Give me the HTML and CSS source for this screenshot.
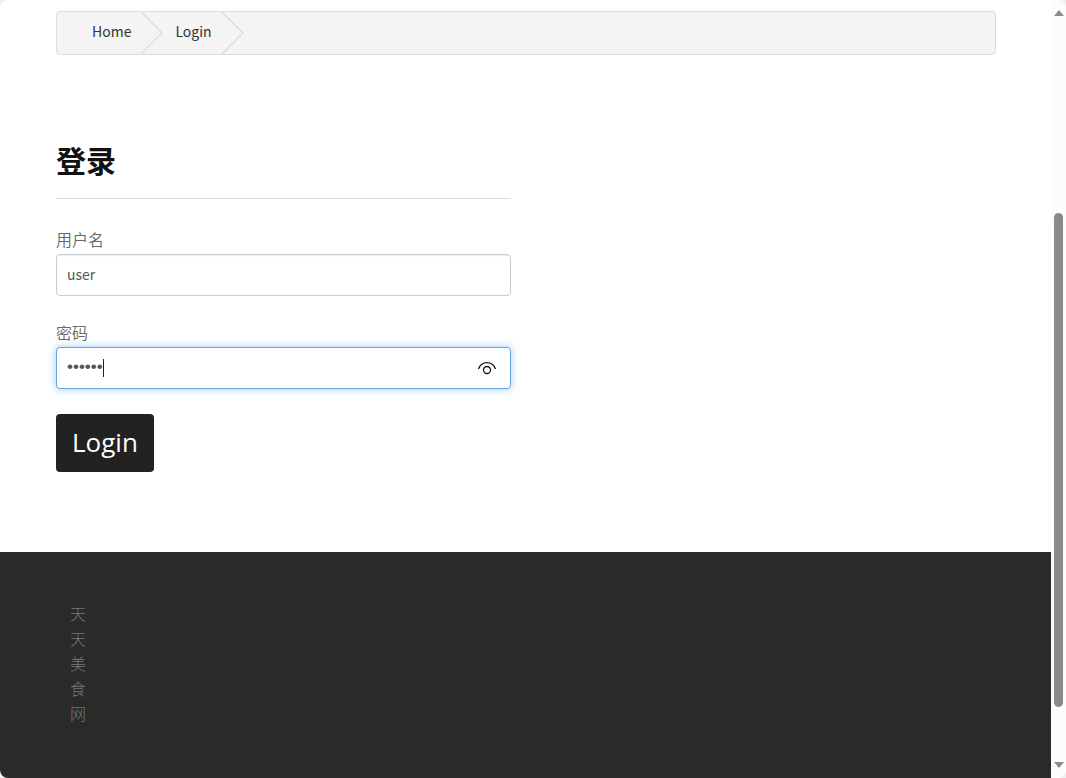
FILE: index.html
```
<!DOCTYPE html>
<html lang="zh-CN">
<head>
    <meta charset="UTF-8">
    <meta name="viewport" content="width=device-width, initial-scale=1.0">
    <title>登录</title>
    <link rel="stylesheet" href="styles.css">
</head>
<body>
    <div class="window">
        <div class="page">
            <main class="container">
                <nav>
                    <ul class="breadcrumb">
                        <li>
                            <a href="#">Home</a>
                            <svg class="arrow" viewBox="0 0 23 42"><path d="M0 -1L22 21L0 43"/></svg>
                        </li>
                        <li>
                            <a href="#">Login</a>
                            <svg class="arrow" viewBox="0 0 23 42"><path d="M0 -1L22 21L0 43"/></svg>
                        </li>
                    </ul>
                </nav>

                <form class="login-form">
                    <h1>登录</h1>
                    <div class="form-group">
                        <label for="username">用户名</label>
                        <input type="text" id="username" class="form-control" value="user">
                    </div>
                    <div class="form-group">
                        <label for="password">密码</label>
                        <div class="password-box">
                            <input type="password" id="password" class="form-control active" value="123456">
                            <span class="caret"></span>
                            <button type="button" class="reveal" aria-label="显示密码">
                                <svg viewBox="0 0 20 16"><path d="M1.500 9C3 5 6 2.700 10 2.700S17 5 18.500 9"/><circle cx="10" cy="10" r="3.500"/></svg>
                            </button>
                        </div>
                    </div>
                    <button type="submit" class="btn">Login</button>
                </form>
            </main>

            <footer class="footer">
                <p>天<br>天<br>美<br>食<br>网</p>
            </footer>
        </div>

        <!-- 滚动条 -->
        <div class="scrollbar">
            <svg class="scroll-arrow" viewBox="0 0 10 6"><path d="M0 6L5 0L10 6Z"/></svg>
            <div class="track"><div class="thumb"></div></div>
            <svg class="scroll-arrow" viewBox="0 0 10 6"><path d="M0 0L5 6L10 0Z"/></svg>
        </div>
    </div>
</body>
</html>
```
FILE: styles.css
```
*{
    box-sizing: border-box;
}
body{
    margin: 0;
    background: #f0f0f0;
    color: #666;
    font-family: "Noto Sans CJK SC", sans-serif;
    font-size: 16px;
    line-height: 25px;
}
.window{
    display: flex;
    min-height: 100vh;
    background: #fff;
    border-radius: 8px;
    overflow: hidden;
}
.page{
    flex: 1;
    display: flex;
    flex-direction: column;
}
.container{
    padding: 11px 55px 80px 56px;
}

/*面包屑导航*/
.breadcrumb{
    display: flex;
    height: 44px;
    margin: 0;
    padding: 0 0 0 23px;
    list-style: none;
    background: #f4f4f4;
    border: 1px solid #ddd;
    border-radius: 4px;
}
.breadcrumb li{
    display: flex;
    align-items: center;
    gap: 9px;
    padding-left: 12px;
}
.breadcrumb a{
    color: #333;
    font-size: 14px;
    text-decoration: none;
    padding-bottom: 4px;
}
.arrow{
    width: 23px;
    height: 42px;
    fill: none;
    stroke: #ddd;
    stroke-width: 1.4;
}

/*登录表单*/
.login-form{
    width: calc(50% - 15px);
    margin-top: 82px;
}
h1{
    margin: 0 0 28px;
    padding-bottom: 17px;
    color: #111;
    font-size: 30px;
    line-height: 44px;
    border-bottom: 1px solid #ddd;
}
.form-group{
    margin-bottom: 24px;
}
label{
    display: block;
    margin-bottom: 2px;
    font-weight: 350;
}
.form-control{
    display: block;
    width: 100%;
    height: 42px;
    padding: 0 10px 2px;
    color: #555;
    font-family: inherit;
    font-size: 14px;
    background: #fff;
    border: 1px solid #ccc;
    border-radius: 4px;
    box-shadow: inset 0 1px 1px rgba(0, 0, 0, 0.08);
    outline: none;
}
.password-box{
    position: relative;
}
.password-box .form-control{
    font-family: "Liberation Sans", sans-serif;
    font-size: 17px;
}
.form-control.active{
    border-color: #66a5d9;
    box-shadow: 0 0 8px rgba(82, 168, 236, 0.6);
}
.caret{
    position: absolute;
    left: 47px;
    top: 12px;
    width: 1px;
    height: 18px;
    background: #222;
}
.reveal{
    position: absolute;
    right: 14px;
    top: 13px;
    width: 20px;
    height: 16px;
    padding: 0;
    border: none;
    background: none;
    cursor: pointer;
}
.reveal svg{
    display: block;
    width: 20px;
    height: 16px;
    fill: none;
    stroke: #111;
    stroke-width: 1.3;
}
.btn{
    display: block;
    height: 58px;
    margin-top: 25px;
    padding: 0 16px 2px;
    color: #fff;
    font-family: "Open Sans", sans-serif;
    font-size: 26px;
    background: #222;
    border: none;
    border-radius: 4px;
    cursor: pointer;
}
.btn:hover{
    background: #333;
}

/*页脚*/
.footer{
    flex: 1;
    padding: 49px 70px;
    background: #2a2a2a;
}
.footer p{
    margin: 0;
    color: #777;
    font-weight: 300;
}

.scrollbar{
    display: flex;
    flex-direction: column;
    align-items: center;
    width: 15px;
    padding: 10px 0;
    background: #fcfcfc;
}
.scroll-arrow{
    width: 10px;
    height: 6px;
    fill: #8a8a8a;
}
.track{
    flex: 1;
    display: flex;
    flex-direction: column;
    padding: 197px 0 55px;
}
.thumb{
    flex: 1;
    width: 9px;
    border-radius: 5px;
    background: #8a8a8a;
}
```
